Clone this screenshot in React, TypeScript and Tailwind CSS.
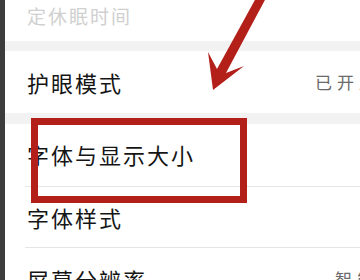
const cjk = { fontFamily: '"Noto Sans CJK SC", "Noto Sans", sans-serif' }

function Row({
  label,
  value,
  valueLeft = "left-[310px]",
  height,
  muted,
  divider,
}: {
  label: string
  value?: string
  valueLeft?: string
  height: string
  muted?: boolean
  divider?: boolean
}) {
  return (
    <div className={`relative flex shrink-0 items-center bg-white ${height}`}>
      <span
        className={`ml-[22px] whitespace-nowrap tracking-[2px] ${
          muted ? "text-[19px] text-[#d0d0d0]" : "text-[22px] text-[#151515]"
        }`}
      >
        {label}
      </span>
      {value && (
        <span className={`absolute ${valueLeft} whitespace-nowrap text-[17px] tracking-[5px] text-[#6a6a6a]`}>
          {value}
        </span>
      )}
      {divider && <div className="absolute bottom-0 left-[20px] right-0 h-px bg-[#e6e6e6]" />}
    </div>
  )
}

export default function App() {
  return (
    <div className="relative flex h-[280px] w-[360px] overflow-hidden bg-[#3c3c3c]" style={cjk}>
      <div className="ml-[5px] flex flex-1 flex-col overflow-hidden bg-white">
        <Row label="定休眠时间" height="h-[41px] pb-[8px]" muted />
        <div className="h-[10px] shrink-0 bg-[#f2f2f2]" />
        <Row label="护眼模式" value="已开启" height="h-[62px]" />
        <div className="h-[11px] shrink-0 bg-[#f2f2f2]" />
        <Row label="字体与显示大小" height="h-[63px] pb-[2px]" divider />
        <Row label="字体样式" height="h-[61px]" divider />
        <Row label="屏幕分辨率" value="智能" valueLeft="left-[330px]" height="h-[62px]" />
      </div>

      {/* 标注：红框 + 箭头 */}
      <div className="absolute left-[31px] top-[118px] h-[85px] w-[216px] border-[7px] border-[#b3201a]" />
      <svg className="absolute left-0 top-0" width="360" height="280" viewBox="0 0 360 280">
        <polygon
          points="213,90 208,52 217,69 256,-2 266,-2 226,73 244,66"
          fill="#b3201a"
        />
      </svg>
    </div>
  )
}
